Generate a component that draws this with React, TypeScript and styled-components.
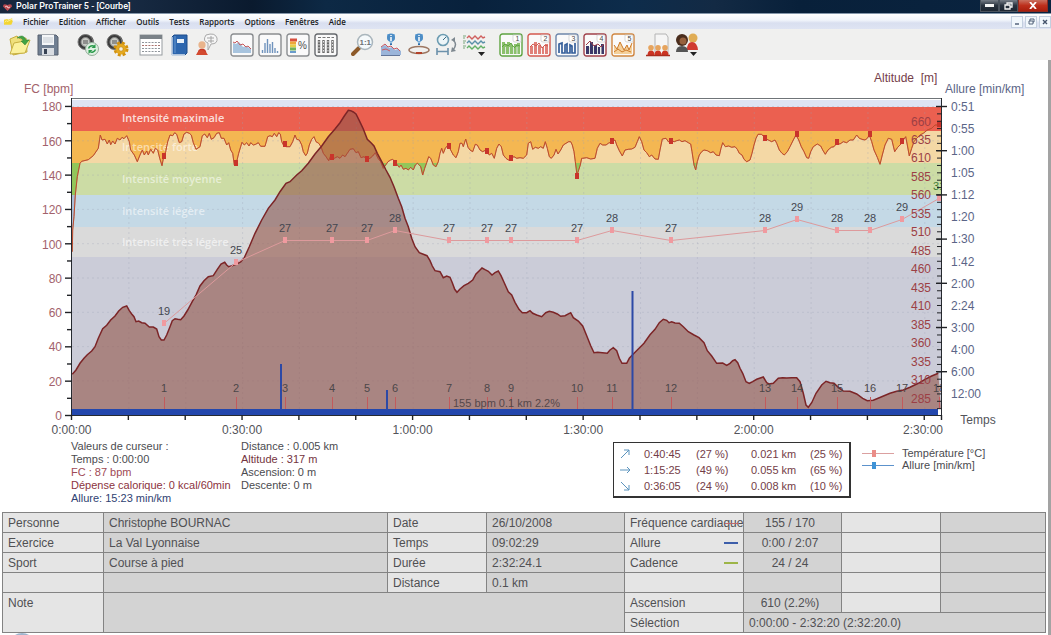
import React from 'react';
import styled, { createGlobalStyle } from 'styled-components';

const GlobalStyle = createGlobalStyle`
  * { box-sizing: border-box; }
  body { margin: 0; background: #fff; font-family: 'Liberation Sans', Arial, sans-serif; }
`;

/* ---------- window frame ---------- */

const Window = styled.div`
  display: flex;
  flex-direction: column;
  min-height: 100vh;
  overflow: hidden;
`;

const TitleBar = styled.header`
  display: flex;
  align-items: center;
  height: 14px;
  padding: 0 3px;
  background: linear-gradient(90deg, #17263c 0%, #1a2d46 10%, #0a1a2e 24%, #0d2945 31%, #08213c 45%, #0d2c4b 60%, #132a44 68%, #08203a 76%, #0a2440 100%);
  border-bottom: 1px solid #8496aa;
  color: #fff;
`;

const AppTitle = styled.h1`
  margin: 0 auto 0 4px;
  font: 500 9px/13px Roboto, 'Open Sans', sans-serif;
`;

const CaptionButton = styled.button<{ $close?: boolean }>`
  display: flex;
  align-items: center;
  justify-content: center;
  width: ${p => (p.$close ? 30 : 19)}px;
  height: 12px;
  margin-bottom: 1px;
  padding: 0;
  border: 1px solid ${p => (p.$close ? '#8d2a20' : '#4a535e')};
  border-top: 0;
  background: ${p => (p.$close ? 'linear-gradient(#c9705f, #bd2f1c 50%, #a81e0d)' : 'linear-gradient(#767d87, #2a333f 50%, #1d2632)')};
`;

const MenuBar = styled.nav`
  display: flex;
  align-items: center;
  gap: 10px;
  height: 15px;
  padding: 0 0 0 4px;
  background: linear-gradient(#fff, #f2f5fb 40%, #d9dff0 60%, #dfe4f3);
`;

const MenuItem = styled.button`
  padding: 0;
  border: 0;
  background: none;
  color: #1b1d24;
  font: 600 8px/13px 'Open Sans', 'Noto Sans', sans-serif;
`;

const MdiButtons = styled.div`
  display: flex;
  gap: 2px;
  margin-left: auto;
`;

const MdiButton = styled.button`
  display: flex;
  align-items: center;
  justify-content: center;
  width: 12px;
  height: 12px;
  padding: 0;
  border: 1px solid #c3cfdf;
  background: #f1f7fc;
`;

const ToolBar = styled.div`
  display: flex;
  align-items: center;
  height: 31px;
  padding-left: 7px;
  background: #f0f0ef;
`;

const ToolGroup = styled.div<{ $gap: number; $lead: number }>`
  display: flex;
  gap: ${p => p.$gap}px;
  margin-left: ${p => p.$lead}px;
`;

const ToolButton = styled.button`
  width: 24px;
  height: 24px;
  padding: 0;
  border: 0;
  background: none;
  svg { display: block; }
`;

const Document = styled.main`
  flex: 1;
  border-right: 3px solid #a3a3a3;
  background: #fff;
`;

/* ---------- toolbar drawings ---------- */

const Watch = () => (
  <>
    <path d="M4 9 Q2 1 10 2 L15 3 Q19 6 17 12 L12 17 L5 15Z" fill="#3a3a3a" />
    <circle cx="9.500" cy="9" r="7.500" fill="#3c3c3c" stroke="#777" />
    <circle cx="9.500" cy="9" r="4.500" fill="#c9cbc6" stroke="#8b8b8b" />
    <path d="M7 8h5M7 10h5" stroke="#555" />
  </>
);

const Frame = ({ color = '#8a8d90' }: { color?: string }) => (
  <rect x="1" y="1" width="22" height="22" rx="2.500" fill="#fafafa" stroke={color} strokeWidth="1.400" />
);

const InfoPin = () => (
  <>
    <path d="M12 12V9" stroke="#2d6ca8" strokeWidth="2" />
    <path d="M8 1h8v5l-4 5-4-5z" fill="#9cc4e4" />
    <circle cx="12" cy="4.500" r="4" fill="#4d8dc6" />
    <path d="M12 2v1M12 4v4" stroke="#fff" strokeWidth="1.500" />
  </>
);

const Preset = ({ n, color, kind }: { n: number; color: string; kind: number }) => (
  <>
    <Frame color={color} />
    {kind === 0 && <path d="M3 21V9h3v2h2V9h3v2h2v2h2v-2h3v-1h3v11z" fill="#8bc06c" />}
    {kind === 1 && <path d="M3 21v-8h3v8M7 21V9h3v12M11 21v-9h3v9M15 21v-7h2v7M18 21V11h3v10z" fill="#e08078" />}
    {kind === 2 && <path d="M4 20V11l3-1v10h3V12l2-1v9h3v-8l2 1v7h3V10" fill="none" stroke="#355f9a" strokeWidth="1.700" />}
    {kind === 3 && <path d="M3 21v-8h3v8M7 21V9h3v12M11 21v-9h3v9M15 21v-7h2v7M18 21V11h3v10z" fill="#3b3768" />}
    {kind === 4 && <path d="M3 21V12l3 4 3-7 4 8 3-5 2 5 3-7v11z" fill="#f5d09a" />}
    {kind < 2 && <path d="M3 14l3-3 3 2 3-3 3 5 3-3 3 1" fill="none" stroke={color} />}
    {kind === 3 && <path d="M3 12l4-4 4 5 4-2 3 3 3-3" fill="none" stroke={color} />}
    {kind === 4 && <path d="M3 12l3 4 3-7 4 8 3-5 2 5 3-7M3 19l4-3 4 3 4-2 5 2" fill="none" stroke="#cc7a28" />}
    {(kind === 0 || kind === 3) && <path d="M6.500 14v7M10.500 14v7M14.500 14v7M18 14v7" stroke="#dfe8df" />}
    <path d="M14 2v5q0 2 2 2h6V2z" fill="#fff" stroke="#c9c9c9" strokeWidth="0.700" />
    <text x="16.500" y="7.500" fontSize="7" fill="#444">{n}</text>
  </>
);

const Person = ({ x, y, s, body, head }: { x: number; y: number; s: number; body: string; head: string }) => (
  <g transform={`translate(${x} ${y}) scale(${s})`}>
    <path d="M-5 12Q-5 5 0 5T5 12z" fill={body} />
    <circle r="4" cy="1" fill={head} />
  </g>
);

const icons: Record<string, React.ReactNode> = {
  Ouvrir: (
    <>
      <path d="M3 6l7-3 3 3 6-1 1 14-14 3z" fill="#efe07c" stroke="#c5ad3c" />
      <path d="M3 21l4-11 16-3-5 13z" fill="#fbf19c" stroke="#c7b042" />
      <path d="M10 5q6-5 9 2h3l-4 5-4-4h2q-1-4-6-3z" fill="#42a343" stroke="#2d7f31" strokeWidth="0.500" />
    </>
  ),
  Enregistrer: (
    <>
      <path d="M2 2h18l2 2v18H2z" fill="#707f92" stroke="#56606e" />
      <rect x="6" y="2" width="12" height="10" fill="#f4f6f8" />
      <path d="M7 5h10M7 7h10M7 9h10" stroke="#c4cbd2" />
      <rect x="6" y="15" width="12" height="7" fill="#d9dde2" />
      <rect x="8" y="16" width="3" height="5" fill="#384354" />
    </>
  ),
  Synchroniser: (
    <>
      <Watch />
      <circle cx="16" cy="16" r="6.500" fill="#dff0e2" stroke="#93ad99" />
      <path d="M12.500 15.500a4 4 0 0 1 6-2M19.500 16.500a4 4 0 0 1-6 2" fill="none" stroke="#2c9b4c" strokeWidth="1.500" />
      <path d="M19.500 11v4h-4zM12.500 21v-4h4z" fill="#2c9b4c" />
    </>
  ),
  Reglages: (
    <>
      <Watch />
      <circle cx="16" cy="16" r="5.500" fill="#e5a91f" />
      <circle cx="16" cy="16" r="6.200" fill="none" stroke="#d2920f" strokeWidth="2.600" strokeDasharray="2.900 2" />
      <circle cx="16" cy="16" r="2.200" fill="#f6efe0" stroke="#b37d0c" strokeWidth="0.600" />
    </>
  ),
  Calendrier: (
    <>
      <rect x="1" y="2" width="22" height="20" fill="#fff" stroke="#969ba0" />
      <path d="M1 2h22v4H1z" fill="#7b8288" />
      {[9, 12, 15, 18].map(y => (
        <path key={y} d={`M3 ${y}.500h18`} stroke={y === 12 ? '#a9716c' : '#8f959b'} strokeDasharray="2 1.200" />
      ))}
    </>
  ),
  Journal: (
    <>
      <path d="M5 4l2-2h13v18l-2 2H5z" fill="#2d66ae" stroke="#1e4d8b" />
      <path d="M5 4v18h13" fill="none" stroke="#dce6f1" strokeWidth="1.300" />
      <rect x="10" y="6" width="7" height="4" fill="#e8f0f8" />
      <path d="M8 3v17" stroke="#6998d1" />
    </>
  ),
  Conseils: (
    <>
      <path d="M11 2q9-3 11 3 1 6-6 6l-3 6 0-7q-6-2-2-8z" fill="#f6f6f6" stroke="#a9a9a9" />
      <path d="M12 5h7M13 8h6M16 3v7" stroke="#a4a4a4" />
      <Person x={7} y={11} s={0.9} body="#c73827" head="#e9b48c" />
      <path d="M1 22q5-10 12 0z" fill="#d34a30" />
    </>
  ),
  Courbe: (
    <>
      <Frame />
      <path d="M3 10l3 1 3-2 4 5 3-1 5 3v4H3z" fill="#a8c4de" />
      <path d="M3 9l2 1 2-2 3 4 3-1 3 3 2-1 3 3" fill="none" stroke="#c8595b" />
    </>
  ),
  Histogramme: (
    <>
      <Frame />
      <path d="M4.500 20v-3M7 20V10M9.500 20V6M12 20V11M14.500 20V9M17 20v-5M19.500 20v-2" stroke="#6f93bd" strokeWidth="1.400" />
    </>
  ),
  Zones: (
    <>
      <Frame />
      <path d="M4 7h7" stroke="#d74f3e" strokeWidth="3" />
      <path d="M4 10h6" stroke="#eda63a" strokeWidth="3" />
      <path d="M4 13h6" stroke="#e6cf4a" strokeWidth="3" />
      <path d="M4 16h6" stroke="#70b25d" strokeWidth="3" />
      <path d="M4 19h6" stroke="#6a9ccc" strokeWidth="2" />
      <text x="12" y="16" fontSize="10" fill="#4b4b4b">%</text>
    </>
  ),
  Tours: (
    <>
      <Frame color="#66696d" />
      <path d="M4 4.500h16" stroke="#777" strokeDasharray="3 1.500" />
      {[5, 9.500, 14, 18.500].map(x => (
        <path key={x} d={`M${x} 7v13`} stroke="#6a6a6a" strokeWidth="2.400" />
      ))}
      {[5, 9.500, 14, 18.500].map(x => (
        <path key={x} d={`M${x} 8v11`} stroke="#e8e8e8" strokeWidth="1" strokeDasharray="1.500 1.500" />
      ))}
    </>
  ),
  Zoom: (
    <>
      <path d="M2 21l6-6" stroke="#8d5a2a" strokeWidth="4" strokeLinecap="round" />
      <circle cx="14" cy="9" r="7.500" fill="#f5f9fb" stroke="#aab6bd" strokeWidth="1.500" />
      <text x="8.500" y="12" fontSize="8" fontWeight="700" fill="#6c7073">1:1</text>
    </>
  ),
  InfoCourbe: (
    <>
      <path d="M2 14l4-2 4 3 3-1 3 3 3-1 3 2v4H2z" fill="#9bb5da" />
      <path d="M2 14l4-3 3 3 3-1 3 3 3-1 3 3M3 17l4-1 4 2" fill="none" stroke="#cb5960" />
      <path d="M2 22.500h19" stroke="#63769a" />
      <InfoPin />
    </>
  ),
  InfoTour: (
    <>
      <ellipse cx="12" cy="17" rx="10" ry="3.500" fill="none" stroke="#9d7762" strokeWidth="1.500" />
      <InfoPin />
      <path d="M9 20h6" stroke="#b3422a" strokeWidth="2" />
    </>
  ),
  Temps: (
    <>
      <circle cx="8" cy="7" r="5.500" fill="#edf5f8" stroke="#6d9cb2" strokeWidth="1.600" />
      <path d="M8 7l3-3" stroke="#3e6d85" />
      <path d="M2 18.500h11M2 15v7M13 15v7" stroke="#6c91ab" strokeWidth="1.600" />
      <path d="M18 7q5 4 0 10" fill="none" stroke="#7e8890" strokeWidth="1.500" />
      <path d="M16 7l4-3v5zM16 19l1-5 4 4z" fill="#7e8890" />
    </>
  ),
  Courbes: (
    <>
      {['#d0605f', '#5890a8', '#62b066'].map((c, i) => (
        <g key={c} fill="none" stroke={c}>
          <path d={`M4 ${5 + i * 5}l2-2 3 3 3-3 3 3 3-3 2 2 2-1`} strokeWidth="1.400" />
          <path d={`M0 ${3 + i * 5}h3M0 ${5 + i * 5}h2`} stroke="#7ba77d" />
        </g>
      ))}
      <path d="M15 19h7l-3.500 4z" fill="#222" />
    </>
  ),
  Rapport: (
    <>
      <path d="M9 1h11l2 3v17H9z" fill="#f5f5f5" stroke="#b4b4b4" />
      {[5, 12, 19].map(x => <Person key={x} x={x} y={14} s={0.7} body="#cc3322" head="#e6a45e" />)}
      <path d="M0 22.500h24" stroke="#a92c1e" strokeWidth="1.500" />
    </>
  ),
  Personnes: (
    <>
      <circle cx="18" cy="5" r="4.500" fill="#e0ad55" />
      <path d="M12 17q0-8 5-8t6 8z" fill="#d03a30" />
      <circle cx="7" cy="7" r="6" fill="#4a2d1d" />
      <circle cx="8" cy="8" r="3.500" fill="#97613e" />
      <path d="M1 19q0-6 6-6t6 6z" fill="#555" />
      <path d="M15 19h7l-3.500 4z" fill="#222" />
    </>
  ),
  Selection1: <Preset n={1} color="#5ea341" kind={0} />,
  Selection2: <Preset n={2} color="#d3584f" kind={1} />,
  Selection3: <Preset n={3} color="#6d86ab" kind={2} />,
  Selection4: <Preset n={4} color="#a0404a" kind={3} />,
  Selection5: <Preset n={5} color="#d08640" kind={4} />,
};

const toolGroups = [
  { lead: 0, gap: 5, names: ['Ouvrir', 'Enregistrer'] },
  { lead: 16, gap: 5, names: ['Synchroniser', 'Reglages'] },
  { lead: 10, gap: 4, names: ['Calendrier', 'Journal', 'Conseils'] },
  { lead: 11, gap: 4, names: ['Courbe', 'Histogramme', 'Zones', 'Tours'] },
  { lead: 13, gap: 4, names: ['Zoom', 'InfoCourbe', 'InfoTour', 'Temps', 'Courbes'] },
  { lead: 12, gap: 4, names: ['Selection1', 'Selection2', 'Selection3', 'Selection4', 'Selection5'] },
  { lead: 11, gap: 5, names: ['Rapport', 'Personnes'] },
];

const menus = ['Fichier', 'Edition', 'Afficher', 'Outils', 'Tests', 'Rapports', 'Options', 'Fenêtres', 'Aide'];

/* ---------- chart ---------- */

const ChartSvg = styled.svg`
  display: block;
  width: 100%;
  height: auto;
  font-family: 'Liberation Sans', Arial, sans-serif;
  font-size: 12px;
`;

const ZoneNames = styled.g`
  fill: #fff;
  font: 600 11px 'Open Sans', 'Noto Sans', sans-serif;
`;

/* Each run holds samples at three per chart unit, counted from its own origin. */
type Run = [number, number, string];

const heartRate: Run[] = [
  [0, 70, '217,545 218,480 222,440 226,375 232,320 240,280 245,274 265,269 280,257 295,235 301,195 306,210 315,208 322,222 328,210 332,224 338,213 345,222 352,205 360,210 366,202 372,206 380,197 388,215 392,240 403,255 412,275 420,255 427,240 433,255 440,243 445,255 452,238 460,250 466,235 473,240 479,265 486,287 491,260 497,245 503,215 510,195 518,197 524,188 530,193 538,218 545,215 552,192 560,187 568,190 574,195 580,218 588,238 600,230 607,197 614,192 622,203 628,190 634,208 642,203 650,190 658,188 664,205 672,205 680,225 686,218 692,240 698,250 703,285 709,280 716,250 726,217 733,225 740,218 747,228 752,218 760,225 767,223 775,218 782,229 795,229 803,200 810,197 817,200 823,190 830,200 836,188 841,192 845,215 852,228 860,230 870,230'],
  [290, 90, '8,155 15,135 20,148 28,150 35,165 40,185 47,197 52,190 58,165 65,148 72,140 78,155 86,160 93,170 100,190 108,200 116,212 123,195 133,205 142,200 150,205 158,195 165,200 172,190 180,178 190,176 198,188 205,185 213,203 222,200 230,208 240,205 248,198 256,188 264,205 272,215 280,235 287,225 294,215 302,210 308,208 315,215 322,225 328,232 333,225 340,238 348,235 355,240 362,232 370,240 376,225 382,220 388,225 392,230 398,255 404,235 410,218 416,200 422,205 430,225 438,230 445,215 450,190 455,175 460,190 466,175 474,165 482,180 490,195 498,203 505,185 510,160 516,160 520,170 527,147 534,172 540,180 548,185 556,163 562,165 570,180 578,185 588,180 598,195 605,190 613,205 620,175 627,162 634,170 640,195 648,205 655,210 663,205 672,200 680,205 690,203 700,205 710,195 715,160 722,155 728,178 736,172 745,175 752,170 760,175 766,155 772,175 778,200 784,205 792,195 798,178 804,192 812,180 820,165 828,160 836,155 842,155 847,165 852,185 856,215 861,255 866,240 871,225 875,205'],
  [580, 90, '8,205 20,203 32,207 45,205 52,175 60,160 68,165 78,165 85,160 95,155 105,150 110,165 118,182 127,198 135,180 145,178 155,177 165,172 172,155 178,140 185,155 192,180 200,188 208,200 215,195 225,207 235,208 240,180 247,147 258,145 265,155 273,153 283,155 290,152 298,150 306,155 315,152 325,158 332,162 336,185 342,225 347,240 352,215 358,195 365,185 372,180 382,182 392,188 400,185 408,195 418,197 423,175 428,158 436,170 446,168 455,172 465,170 472,178 478,190 486,195 492,208 500,215 510,210 516,190 522,165 528,145 534,133 545,133 555,145 565,150 575,155 585,150 590,160 598,180 606,190 613,195 622,185 630,170 640,150 648,135 656,150 664,170 672,185 680,203 686,205 692,185 700,170 712,162 722,168 728,180 736,193 744,180 754,172 762,170 770,160 780,162 790,155 800,158 810,150 820,150 830,135 838,145 846,148 855,150 862,145 868,135'],
  [800, 70, '215,215 222,240 232,262 240,283 247,255 255,225 265,205 275,208 284,245 293,232 303,222 310,210 317,200 322,225 328,258 335,235 342,215 350,205 360,195 370,190 382,180 395,175 405,165 413,165 422,170'],
];

const altitude: Run[] = [
  [0, 250, '217,373 228,360 240,340 252,325 262,314 275,303 285,290 295,265 308,236 320,226 332,210 345,198 356,183 368,172 380,168 388,182 395,192 402,200 408,215 416,213 425,218 435,220 448,231 460,231 470,237 477,260 484,270 492,270 500,255 510,230 517,212 525,206 533,208 542,209 552,198 563,180 575,158 588,135 600,108 612,92 625,80 640,77 652,58 663,42 674,37 680,45 686,50 696,47 708,43 722,36 733,23'],
  [0, 70, '748,530 765,490 785,450 805,415 825,390 840,365 858,340'],
  [290, 90, '0,275 20,255 35,242 55,220 75,192 95,168 115,140 135,117 150,98 163,78 175,61 182,62 190,66 198,72 208,92 220,117 232,148 243,158 252,168 262,190 275,215 288,240 300,262 312,290 325,325 335,350 345,385 355,410 365,445 375,470 388,488 400,493'],
  [320, 250, '321,17 330,32 337,48 345,62 360,65 370,83 380,78 390,82 397,98 404,118 411,127 420,117 432,107 445,100 458,90 468,72 478,62 486,54 495,59 505,64 516,75 525,68 535,63 543,77 552,97 565,125 575,135 585,157 597,178 607,188 620,188 630,182 638,190 650,195 665,200 677,188 688,184 700,187 712,192 722,199 735,197 752,188 760,203 775,213 788,228 800,257 812,287 822,308 833,307 847,308 862,310 870,300 880,293 890,302 898,325 906,340 920,340 928,325 940,312 955,297 972,280'],
  [620, 250, '90,254 105,238 118,218 130,208 140,211 147,218 155,215 165,219 178,220 190,230 205,245 222,255 237,263 252,278 262,302 275,318 290,340 308,339 320,346 330,340 338,332 345,329 353,338 360,355 368,370 378,395 388,400 398,395 410,388 430,381 440,398 447,402 460,400 475,385 488,383 500,384 515,383 530,383 540,395 550,430 558,465 565,472 575,458 588,430 605,405 618,394 630,398 642,400 655,412 670,423 690,424 710,432 728,445 742,452 760,451 785,440 810,430 830,424 850,420 870,412 895,400 915,388 935,378 955,370'],
];

const toPoints = (runs: Run[]) =>
  runs
    .flatMap(([ox, oy, samples]) =>
      samples.split(' ').map(s => {
        const [x, y] = s.split(',').map(Number);
        return `${(ox + x / 3).toFixed(1)},${(oy + y / 3).toFixed(1)}`;
      }),
    )
    .join(' ');

const hrPoints = toPoints(heartRate);
const altPoints = toPoints(altitude);

const zones = [
  { top: 100, bottom: 107, full: '#dee4f3', light: '#dee4f3' },
  { top: 107, bottom: 131, full: '#eb6050', light: '#eb6050' },
  { top: 131, bottom: 163, full: '#f4b752', light: '#f4d8a5' },
  { top: 163, bottom: 195, full: '#92c65a', light: '#ccdca5' },
  { top: 195, bottom: 227, full: '#a9bdd6', light: '#c4d9e6' },
  { top: 227, bottom: 257, full: '#cfcfd2', light: '#dadada' },
  { top: 257, bottom: 409, full: '#c4c5d3', light: '#cbccd8' },
];

const zoneNames: [string, number, number][] = [
  ['Intensité maximale', 122, 0.8],
  ['Intensité forte', 151, 0.55],
  ['Intensité moyenne', 183, 0.55],
  ['Intensité légère', 215, 0.55],
  ['Intensité très légère', 246, 0.6],
];

/* lap marks: x, temperature, temperature y, heart rate y */
const laps: [number, number, number, number][] = [
  [164, 19, 323, 156], [236, 25, 262, 163], [285, 27, 240, 144], [332, 27, 240, 157],
  [367, 27, 240, 159], [395, 28, 230, 163], [449, 27, 240, 146], [487, 27, 240, 151],
  [511, 27, 240, 158], [577, 27, 240, 176], [612, 28, 230, 141], [671, 27, 240, 141],
  [765, 28, 230, 138], [797, 29, 219, 134], [837, 28, 230, 142], [870, 28, 230, 134],
  [902, 29, 219, 141], [939, 31, 198, 124],
];

const paces = ['0:51', '0:55', '1:00', '1:05', '1:12', '1:20', '1:30', '1:42', '2:00', '2:24', '3:00', '4:00', '6:00', '12:00'];

const range = (n: number) => Array.from({ length: n }, (_, i) => i);

const Chart = () => (
  <ChartSvg viewBox="0 60 1048 378" role="img" aria-label="Courbe">
    <defs>
      <clipPath id="underHr">
        <polygon points={`${hrPoints} 941,409 72,409`} />
      </clipPath>
      <clipPath id="plot">
        <rect x="72" y="98" width="869" height="318" />
      </clipPath>
    </defs>

    {zones.map(z => <rect key={z.top} x="72" y={z.top} width="869" height={z.bottom - z.top} fill={z.full} />)}
    <g clipPath="url(#underHr)">
      {zones.map(z => <rect key={z.top} x="72" y={z.top} width="869" height={z.bottom - z.top} fill={z.light} />)}
    </g>

    <g stroke="#9aa3b5" strokeOpacity="0.3" strokeDasharray="2 3">
      {range(15).map(i => <path key={i} d={`M${128.9 + i * 56.85} 107V409`} />)}
      {range(9).map(i => <path key={i} d={`M72 ${106.500 + i * 34.3}H941`} />)}
    </g>

    <ZoneNames>
      {zoneNames.map(([name, y, alpha]) => <text key={name} x="122" y={y} fillOpacity={alpha}>{name}</text>)}
    </ZoneNames>

    <polyline points={hrPoints} fill="none" stroke="#b55330" />
    <polygon points={`${altPoints} 941,409 72,409`} fill="#935549" fillOpacity="0.6" />
    <polyline points={hrPoints} fill="none" stroke="#c8452f" strokeOpacity="0.45" />
    <polyline points={altPoints} fill="none" stroke="#7c2527" strokeWidth="1.500" />

    <g fill="#c9342b">
      {laps.map(l => <rect key={l[0]} x={l[0] - 2} y={l[3] - 3} width="4" height="6" />)}
    </g>
    <polyline points={laps.map(l => `${l[0]},${l[2]}.500`).join(' ')} fill="none" stroke="#dd9a9c" />
    <g fill="#f09a9f">
      {laps.map(l => <rect key={l[0]} x={l[0] - 2} y={l[2] - 3} width="4" height="6" />)}
    </g>

    <g clipPath="url(#plot)" textAnchor="middle" fill="#4c4749" fontSize="11">
      {laps.map((l, i) => (
        <g key={l[0]}>
          <text x={l[0]} y={l[2] - 8} fill={i === 17 ? '#3f7f38' : '#434750'}>{l[1]}</text>
          <path d={`M${l[0]}.500 397V409`} stroke="#c25a5c" />
          <text x={l[0]} y="392">{i + 1}</text>
        </g>
      ))}
    </g>
    <text x="453" y="407" fontSize="11" fill="#55484a">155 bpm 0.1 km 2.2%</text>

    <rect x="72" y="409" width="866" height="6" fill="#2347ad" />
    <path d="M281 364V410M387 390V410M632.500 291V410" stroke="#2c49a6" strokeWidth="2" />

    <path d="M71 98.500H941" stroke="#6f7478" />
    <path d="M71.500 98V416M941.500 98V416M71 415.500H942" fill="none" stroke="#262a30" />
    <g stroke="#202226" strokeWidth="1.400">
      {range(19).map(i => <path key={i} d={`M${i % 2 ? 67 : 65} ${415.500 - i * 17.170}H72`} />)}
      {range(16).map(i => <path key={i} d={`M${71.500 + i * 56.850} 415V420`} />)}
      <path d="M941.500 415V420" />
      {range(42).map(i => <path key={i} d={`M937 ${106.500 + i * 7.370}H942`} strokeWidth="1" />)}
      {range(7).map(i => <path key={i} d={`M936 ${106.500 + i * 44.200}H947`} />)}
    </g>

    <g fill="#a2626b" textAnchor="end">
      {range(10).map(i => <text key={i} x="62" y={420 - i * 34.3}>{i * 20}</text>)}
    </g>
    <text x="24" y="93" fill="#a2626b">FC [bpm]</text>
    <g fill="#9c3f45" textAnchor="end">
      {range(16).map(i => <text key={i} x="931" y={125.500 + i * 18.470}>{660 - i * 25}</text>)}
    </g>
    <text x="874" y="82" fill="#75404a" xmlSpace="preserve">Altitude  [m]</text>
    <g fill="#5b6587">
      {paces.map((p, i) => <text key={p} x="951" y={111 + i * 22.080}>{p}</text>)}
      <text x="945" y="93">Allure [min/km]</text>
    </g>
    <g fill="#53545a" textAnchor="middle">
      {['0:00:00', '0:30:00', '1:00:00', '1:30:00', '2:00:00'].map((t, i) => (
        <text key={t} x={71.500 + i * 170.550} y="434">{t}</text>
      ))}
      <text x="923" y="434">2:30:00</text>
      <text x="978" y="424">Temps</text>
    </g>
  </ChartSvg>
);

/* ---------- readouts below the chart ---------- */

const Readouts = styled.section`
  display: grid;
  grid-template-columns: 170fr 372fr 249fr 186fr;
  align-items: start;
  min-height: 74px;
  padding: 2px 0 0 71px;
  font-size: 11px;
`;

const Lines = styled.ul`
  margin: 0;
  padding: 0;
  list-style: none;
  line-height: 13px;
  white-space: nowrap;
`;

const Line = styled.li<{ $color?: string }>`
  color: ${p => p.$color ?? '#4b4b4f'};
`;

const SlopeTable = styled.table`
  width: 238px;
  margin-top: 2px;
  padding: 3px 0 2px 4px;
  border: 1px solid #333;
  border-right-width: 2px;
  border-bottom-width: 2px;
  border-spacing: 0;
  table-layout: fixed;
  color: #743d47;
  line-height: 16px;
  td { padding: 0; white-space: nowrap; }
  svg { display: block; margin-left: 2px; }
`;

const Legend = styled.ul`
  margin: 7px 0 0;
  padding: 0;
  list-style: none;
  color: #4b4b4f;
  line-height: 12px;
`;

const LegendItem = styled.li`
  display: flex;
  align-items: center;
  gap: 8px;
  white-space: nowrap;
`;

const slopes = [
  { arrow: 'M1 9L9 1M4 1h5v5', cells: ['0:40:45', '(27 %)', '0.021 km', '(25 %)'] },
  { arrow: 'M0 5h10M7 2l3 3-3 3', cells: ['1:15:25', '(49 %)', '0.055 km', '(65 %)'] },
  { arrow: 'M1 1l8 8M9 4v5H4', cells: ['0:36:05', '(24 %)', '0.008 km', '(10 %)'] },
];

const LegendMark = ({ line, dot }: { line: string; dot: string }) => (
  <svg width="32" height="8" viewBox="0 0 32 8">
    <path d="M0 4.500H32" stroke={line} />
    <rect x="10" y="1" width="4" height="7" fill={dot} />
  </svg>
);

/* ---------- exercise table ---------- */

const InfoTable = styled.table`
  width: calc(100% - 4px);
  margin-left: 2px;
  border-collapse: collapse;
  table-layout: fixed;
  color: #505053;
  font-size: 12px;
  line-height: 16px;
`;

const cellBase = `
  height: 20px;
  padding: 2px 5px 0;
  border: 1px solid #838383;
  overflow: hidden;
  white-space: nowrap;
  font-weight: 400;
  text-align: left;
  vertical-align: top;
`;

const Label = styled.th`
  ${cellBase}
  background: #e5e5e5;
`;

const Value = styled.td<{ $center?: boolean; $light?: boolean }>`
  ${cellBase}
  background: ${p => (p.$light ? '#e5e5e5' : '#d3d3d3')};
  padding-right: ${p => (p.$center ? 10 : 5)}px;
  text-align: ${p => (p.$center ? 'center' : 'left')};
`;

const Keyed = styled.span`
  display: flex;
  align-items: center;
  justify-content: space-between;
`;

const Swatch = styled.i<{ $color: string; $over?: boolean }>`
  flex: none;
  width: 14px;
  height: ${p => (p.$over ? 1 : 2)}px;
  margin-left: ${p => (p.$over ? -18 : 0)}px;
  background: ${p => p.$color};
`;

const Footer = styled.footer`
  height: 2px;
  padding-left: 12px;
  overflow: hidden;
  svg { display: block; }
`;

export default function App() {
  return (
    <>
      <GlobalStyle />
      <Window>
        <TitleBar>
          <svg width="9" height="10" viewBox="0 0 9 10">
            <path d="M4.500 9L0 4.500Q0 1 4.500 3 9 1 9 4.500z" fill="#b94950" />
            <path d="M2 5l2-1 1 2 2-1" fill="none" stroke="#f2c9c9" />
          </svg>
          <AppTitle>Polar ProTrainer 5 - [Courbe]</AppTitle>
          <CaptionButton aria-label="Réduire">
            <svg width="9" height="5"><rect y="1" width="9" height="3" fill="#f5f5f5" /></svg>
          </CaptionButton>
          <CaptionButton aria-label="Restaurer">
            <svg width="9" height="8" viewBox="0 0 9 8">
              <path d="M3 3V1h5v4H6M1 3h5v4H1z" fill="none" stroke="#f5f5f5" strokeWidth="1.300" />
            </svg>
          </CaptionButton>
          <CaptionButton $close aria-label="Fermer">
            <svg width="8" height="7" viewBox="0 0 8 7"><path d="M1 0l6 7M7 0L1 7" stroke="#fff" strokeWidth="1.800" /></svg>
          </CaptionButton>
        </TitleBar>

        <MenuBar>
          <svg width="9" height="7" viewBox="0 0 11 8">
            <path d="M0 8V2l4-1 1 1 5-2v3l1 0-2 5z" fill="#f3d534" />
            <path d="M1 5l2-2 1 1 6-3" fill="none" stroke="#fff6a8" />
          </svg>
          {menus.map(m => <MenuItem key={m}>{m}</MenuItem>)}
          <MdiButtons>
            <MdiButton aria-label="Réduire"><svg width="6" height="6"><path d="M1 5h4" stroke="#55657c" strokeWidth="1.500" /></svg></MdiButton>
            <MdiButton aria-label="Restaurer">
              <svg width="7" height="7" viewBox="0 0 7 7"><path d="M2 3V1h4v3H5M1 3h4v3H1z" fill="none" stroke="#55657c" /></svg>
            </MdiButton>
            <MdiButton aria-label="Fermer"><svg width="6" height="6"><path d="M1 1l4 4M5 1L1 5" stroke="#44546c" strokeWidth="1.400" /></svg></MdiButton>
          </MdiButtons>
        </MenuBar>

        <ToolBar>
          {toolGroups.map(g => (
            <ToolGroup key={g.names[0]} $gap={g.gap} $lead={g.lead}>
              {g.names.map(n => (
                <ToolButton key={n} aria-label={n}>
                  <svg width="24" height="24" viewBox="0 0 24 24">{icons[n]}</svg>
                </ToolButton>
              ))}
            </ToolGroup>
          ))}
        </ToolBar>

        <Document>
          <Chart />

          <Readouts>
            <Lines>
              <Line>Valeurs de curseur :</Line>
              <Line>Temps : 0:00:00</Line>
              <Line $color="#a04a55">FC : 87 bpm</Line>
              <Line $color="#8c3340">Dépense calorique: 0 kcal/60min</Line>
              <Line $color="#2f4272">Allure: 15:23 min/km</Line>
            </Lines>
            <Lines>
              <Line>Distance : 0.005 km</Line>
              <Line $color="#743440">Altitude : 317 m</Line>
              <Line>Ascension: 0 m</Line>
              <Line>Descente: 0 m</Line>
            </Lines>
            <SlopeTable>
              <colgroup>
                <col width="26" /><col width="52" /><col width="55" /><col width="59" /><col />
              </colgroup>
              <tbody>
                {slopes.map(s => (
                  <tr key={s.arrow}>
                    <td><svg width="10" height="10" viewBox="0 0 10 10"><path d={s.arrow} fill="none" stroke="#5b93bd" /></svg></td>
                    {s.cells.map(c => <td key={c}>{c}</td>)}
                  </tr>
                ))}
              </tbody>
            </SlopeTable>
            <Legend>
              <LegendItem><LegendMark line="#dba0a0" dot="#ea8d88" />Température [°C]</LegendItem>
              <LegendItem><LegendMark line="#5c92cc" dot="#3f93d6" />Allure [min/km]</LegendItem>
            </Legend>
          </Readouts>

          <InfoTable>
            <colgroup>
              <col width="101" /><col /><col width="99" /><col width="138" />
              <col width="119" /><col width="98" /><col width="99" /><col width="105" />
            </colgroup>
            <tbody>
              <tr>
                <Label>Personne</Label><Value>Christophe BOURNAC</Value>
                <Label>Date</Label><Value>26/10/2008</Value>
                <Label><Keyed>Fréquence cardiaque<Swatch $over $color="#c06a6e" /></Keyed></Label><Value $center>155 / 170</Value>
                <Value $light /><Value />
              </tr>
              <tr>
                <Label>Exercice</Label><Value>La Val Lyonnaise</Value>
                <Label>Temps</Label><Value>09:02:29</Value>
                <Label><Keyed>Allure<Swatch $color="#3d5eaa" /></Keyed></Label><Value $center>0:00 / 2:07</Value>
                <Value $light /><Value />
              </tr>
              <tr>
                <Label>Sport</Label><Value>Course à pied</Value>
                <Label>Durée</Label><Value>2:32:24.1</Value>
                <Label><Keyed>Cadence<Swatch $color="#9db548" /></Keyed></Label><Value $center>24 / 24</Value>
                <Value $light /><Value />
              </tr>
              <tr>
                <Label /><Value />
                <Label>Distance</Label><Value>0.1 km</Value>
                <Value $light /><Value /><Value $light /><Value />
              </tr>
              <tr>
                <Label rowSpan={2}>Note</Label><Value rowSpan={2} colSpan={3} />
                <Label>Ascension</Label><Value $center>610 (2.2%)</Value>
                <Value $light /><Value />
              </tr>
              <tr>
                <Label>Sélection</Label><Value colSpan={3}>0:00:00 - 2:32:20 (2:32:20.0)</Value>
              </tr>
            </tbody>
          </InfoTable>
          <Footer>
            <svg width="20" height="10" viewBox="0 0 20 10"><ellipse cx="10" cy="7" rx="10" ry="7" fill="#9fb6cf" /></svg>
          </Footer>
        </Document>
      </Window>
    </>
  );
}
